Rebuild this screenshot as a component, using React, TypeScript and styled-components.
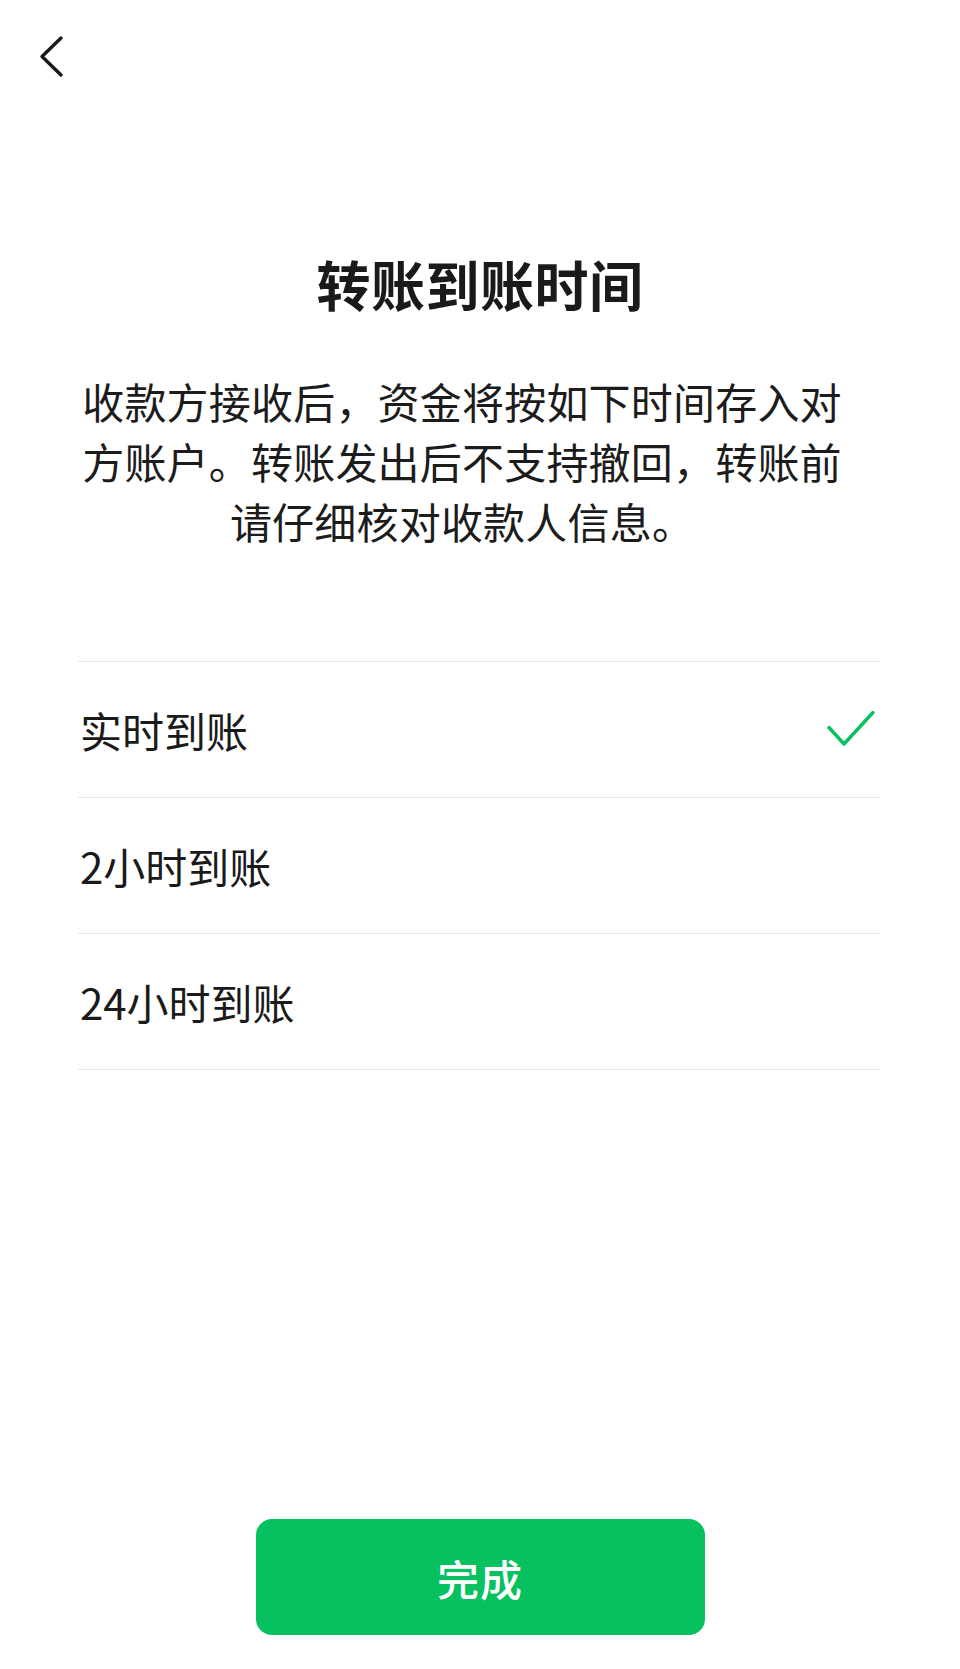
import React, { useState } from "react";
import styled, { createGlobalStyle } from "styled-components";

const GlobalStyle = createGlobalStyle`
  html, body {
    margin: 0;
    padding: 0;
    background: #fff;
  }
  body {
    font-family: "Noto Sans CJK SC", "Noto Sans", sans-serif;
    color: #1a1a1a;
  }
`;

const options = [
  { id: "now", title: "实时到账" },
  { id: "2h", title: "2小时到账" },
  { id: "24h", title: "24小时到账" },
];

function App() {
  const [selected, setSelected] = useState("now");

  return (
    <Page>
      <GlobalStyle />
      <Header>
        <BackButton aria-label="返回">
          <svg width="26" height="44" viewBox="0 0 26 44" fill="none">
            <path
              d="M22 3 L3 21.5 L22 40"
              stroke="#1a1a1a"
              strokeWidth="3.4"
              strokeLinecap="round"
              strokeLinejoin="round"
            />
          </svg>
        </BackButton>
      </Header>

      <Title>转账到账时间</Title>
      <Desc>
        收款方接收后，资金将按如下时间存入对方账户。转账发出后不支持撤回，转账前请仔细核对收款人信息。
      </Desc>

      <List>
        {options.map((item) => (
          <Row key={item.id} onClick={() => setSelected(item.id)}>
            <span>{item.title}</span>
            {selected === item.id && (
              <svg width="50" height="38" viewBox="0 0 50 38" fill="none">
                <path
                  d="M3 17.5 L18 34 L47 2.5"
                  stroke="#07c160"
                  strokeWidth="3.4"
                  strokeLinecap="round"
                  strokeLinejoin="round"
                />
              </svg>
            )}
          </Row>
        ))}
      </List>

      <Footer>
        <DoneButton>完成</DoneButton>
      </Footer>
    </Page>
  );
}

const Page = styled.div`
  width: 960px;
  min-height: 1669px;
  display: flex;
  flex-direction: column;
  box-sizing: border-box;
`;

const Header = styled.div`
  height: 110px;
  display: flex;
  align-items: flex-start;
  padding: 35px 0 0 39px;
  box-sizing: border-box;
`;

const BackButton = styled.div`
  width: 26px;
  height: 44px;
  display: flex;
  cursor: pointer;
`;

const Title = styled.h1`
  margin: 142px 0 0;
  font-size: 54px;
  line-height: 64px;
  font-weight: 700;
  text-align: center;
  color: #1a1a1a;
  letter-spacing: 0.5px;
`;

const Desc = styled.p`
  margin: 55px 0 0 80px;
  width: 764px;
  font-size: 42px;
  line-height: 60px;
  letter-spacing: 0.2px;
  text-align: center;
  color: #1c1c1c;
`;

const List = styled.div`
  margin: 110px 79px 0 78px;
  border-top: 1px solid #e8e8e8;
`;

const Row = styled.div`
  height: 136px;
  box-sizing: border-box;
  border-bottom: 1px solid #e8e8e8;
  display: flex;
  align-items: center;
  justify-content: space-between;
  padding: 0 5px 0 2px;
  font-size: 42px;
  color: #1a1a1a;
  cursor: pointer;
  & > svg {
    margin-top: -2px;
  }
`;

const Footer = styled.div`
  margin-top: auto;
  display: flex;
  justify-content: center;
  padding-bottom: 34px;
`;

const DoneButton = styled.button`
  width: 449px;
  height: 116px;
  border: 0;
  border-radius: 16px;
  background: #07c160;
  color: #fff;
  font-family: "Noto Sans CJK SC", "Noto Sans", sans-serif;
  font-size: 42px;
  font-weight: 500;
  letter-spacing: 1px;
  cursor: pointer;
`;

export default App;
